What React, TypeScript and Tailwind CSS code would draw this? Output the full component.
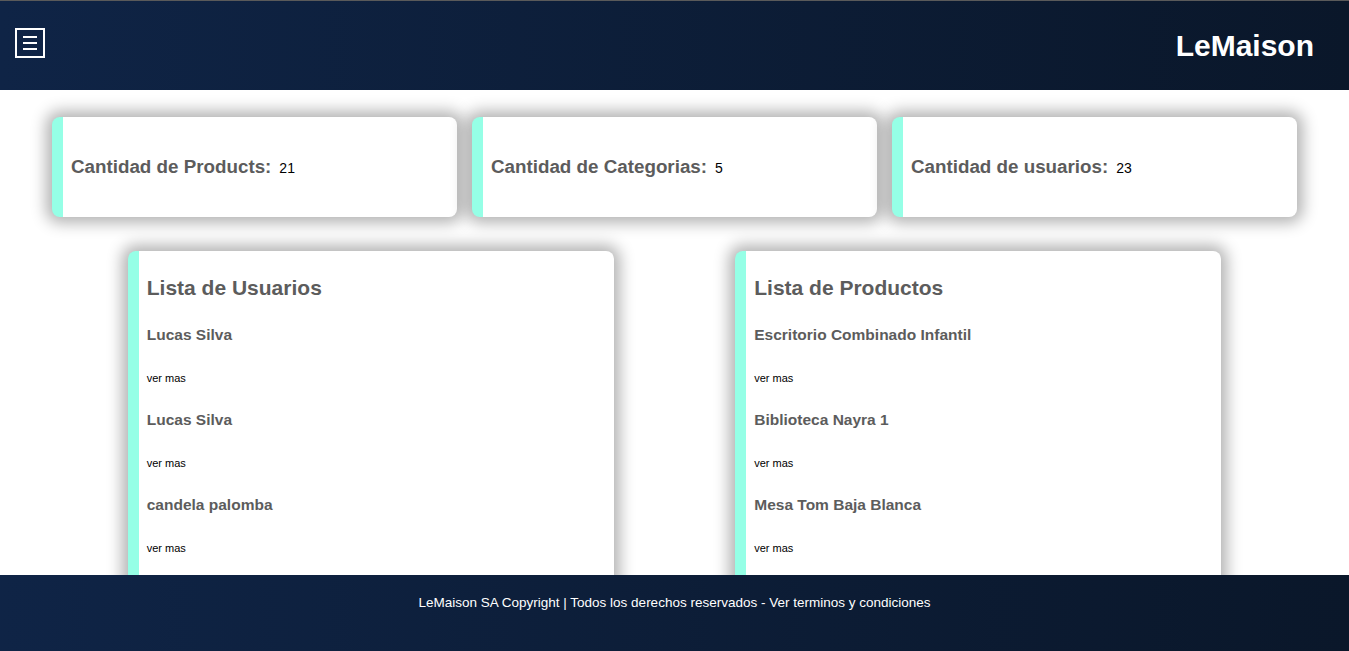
import React from "react";

const stats = [
  { label: "Cantidad de Products:", value: 21 },
  { label: "Cantidad de Categorias:", value: 5 },
  { label: "Cantidad de usuarios:", value: 23 },
];

const usuarios = ["Lucas Silva", "Lucas Silva", "candela palomba", "Martina Lopez", "Juan Perez"];
const productos = [
  "Escritorio Combinado Infantil",
  "Biblioteca Nayra 1",
  "Mesa Tom Baja Blanca",
  "Silla Eames Blanca",
  "Rack TV Nordico",
];

function ListCard({ title, items }: { title: string; items: string[] }) {
  return (
    <div className="w-[486px] mx-auto bg-white rounded-lg border-l-[11px] border-[#95ffe6] shadow-[0_0_15px_6px_rgba(0,0,0,0.3)] pl-[8px] pt-[26px] pb-[30px]">
      <h2 className="text-[21px] leading-[22px] font-bold text-[#5c5c5c]">{title}</h2>
      {items.map((name, idx) => (
        <div key={idx} className={idx === 0 ? "mt-[27px]" : "mt-[26px]"}>
          <h3 className="text-[15.5px] leading-[18px] font-bold text-[#5c5c5c]">{name}</h3>
          <a className="block mt-[28px] text-[11px] leading-[13px] text-black">ver mas</a>
        </div>
      ))}
    </div>
  );
}

export default function App() {
  return (
    <div className="min-h-screen bg-white font-['Liberation_Sans',Arial,sans-serif]">
      {/* Header */}
      <header className="h-[90px] border-t border-[#5a5a5a] bg-gradient-to-r from-[#0f2446] to-[#0a172a] flex items-center justify-between pl-[15px] pr-[35px]">
        <button className="w-[30px] h-[30px] border-2 border-white flex flex-col items-center justify-center gap-[4px] -mt-[6px]">
          <span className="block w-[14px] h-[2px] bg-white" />
          <span className="block w-[14px] h-[2px] bg-white" />
          <span className="block w-[14px] h-[2px] bg-white" />
        </button>
        <h1 className="text-white font-bold text-[30px]">LeMaison</h1>
      </header>

      {/* Stats */}
      <section className="px-[52px] pt-[27px] grid grid-cols-3 gap-[15px]">
        {stats.map((s) => (
          <div
            key={s.label}
            className="h-[100px] bg-white rounded-lg border-l-[11px] border-[#95ffe6] shadow-[0_0_15px_6px_rgba(0,0,0,0.3)] flex items-center pl-[8px]"
          >
            <span className="text-[18.8px] font-bold text-[#5c5c5c]">{s.label}</span>
            <span className="ml-[8px] text-[14px] text-black mt-[2px]">{s.value}</span>
          </div>
        ))}
      </section>

      {/* Lists */}
      <section className="px-[67px] pt-[34px] pb-[100px] grid grid-cols-2">
        <ListCard title="Lista de Usuarios" items={usuarios} />
        <ListCard title="Lista de Productos" items={productos} />
      </section>

      {/* Footer */}
      <footer className="fixed bottom-0 left-0 right-0 h-[76px] bg-gradient-to-r from-[#0f2446] to-[#0a172a] flex justify-center pt-[20px]">
        <p className="text-white text-[13.5px] leading-[16px]">
          LeMaison SA Copyright | Todos los derechos reservados - Ver terminos y condiciones
        </p>
      </footer>
    </div>
  );
}
